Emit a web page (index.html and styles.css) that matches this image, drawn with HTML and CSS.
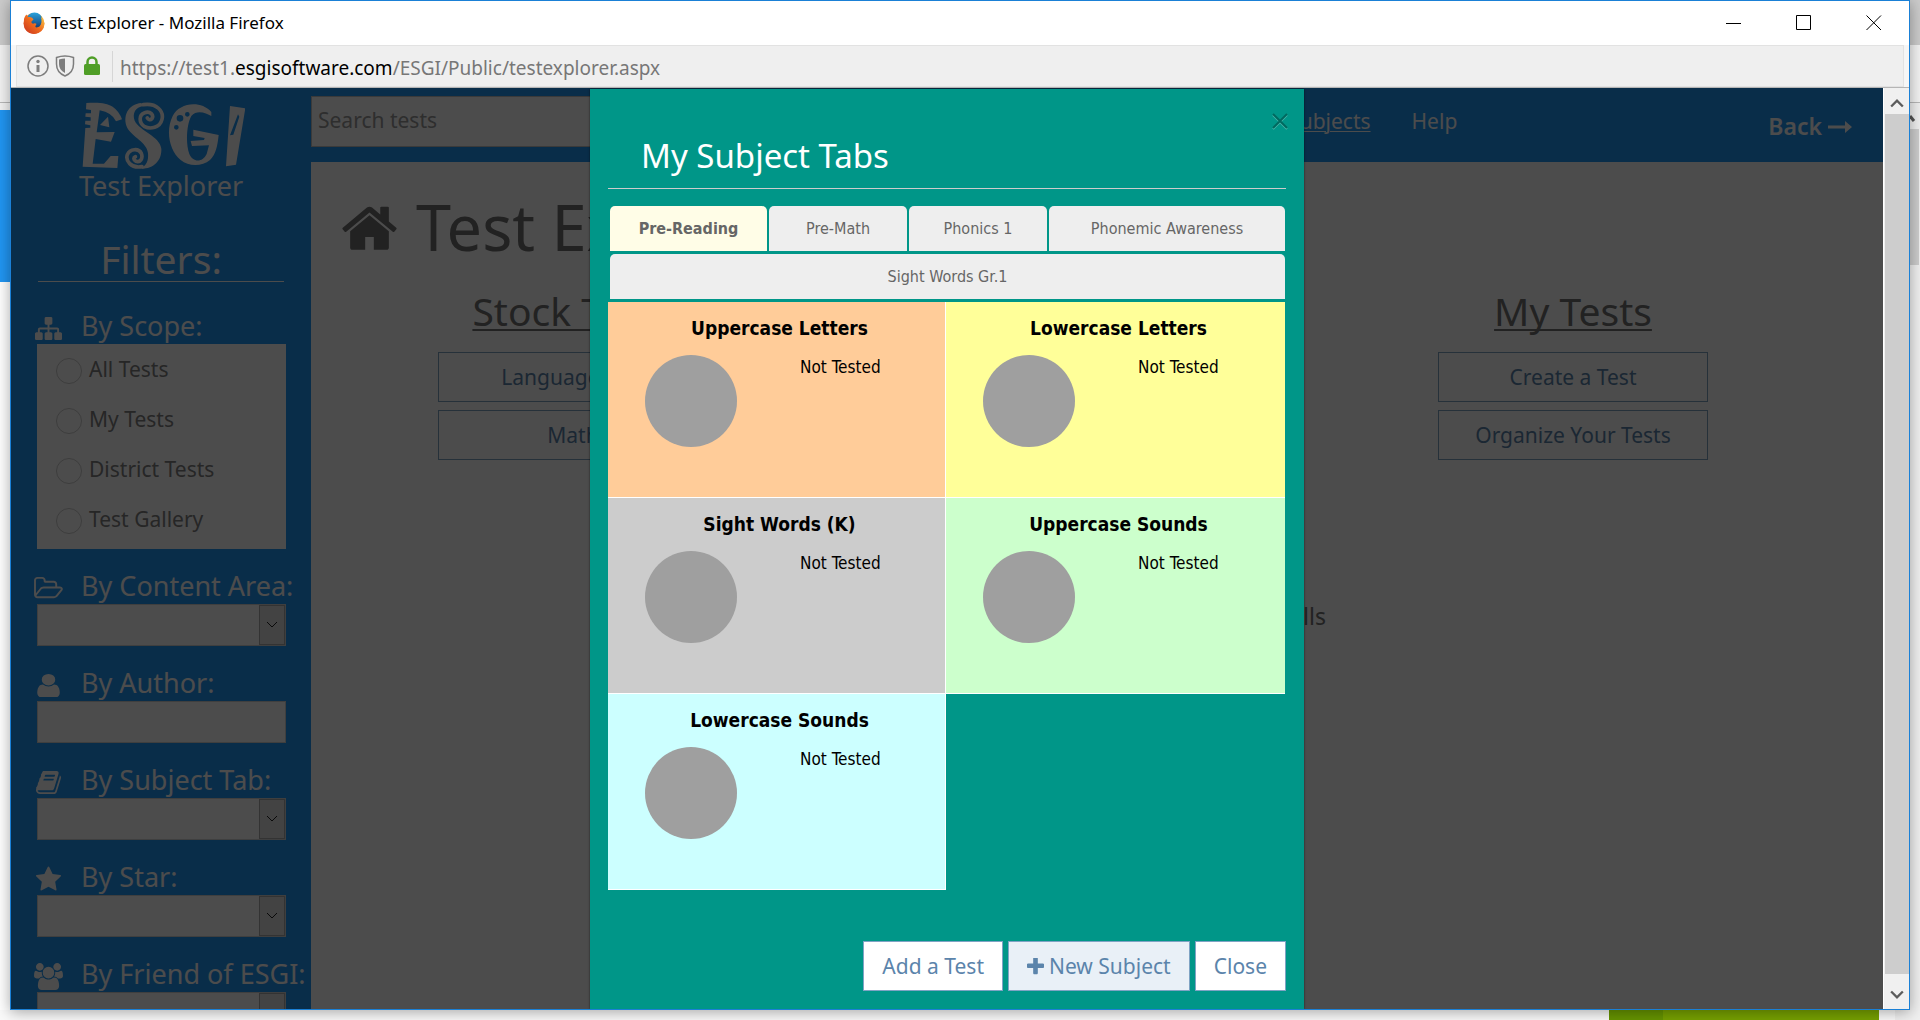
FILE: index.html
```html
<!DOCTYPE html>
<html lang="en">
<head>
<meta charset="utf-8">
<title>Test Explorer</title>
<link rel="stylesheet" href="styles.css">
</head>
<body>
<div class="desk-left" aria-hidden="true">
  <div class="desk-title"></div>
  <div class="desk-toolbar"></div>
  <div class="desk-gap"></div>
  <div class="desk-blue"></div>
</div>

<div class="window">
  <header class="titlebar">
    <svg class="firefox" viewBox="0 0 22 22" aria-hidden="true">
      <defs>
        <linearGradient id="fox" x1="0" y1="1" x2="1" y2="0"><stop offset="0" stop-color="#c8311f"/><stop offset=".5" stop-color="#ee6a1e"/><stop offset="1" stop-color="#fbd84b"/></linearGradient>
        <linearGradient id="globe" x1="0" y1="0" x2="0" y2="1"><stop offset="0" stop-color="#2aa3dc"/><stop offset="1" stop-color="#123a74"/></linearGradient>
      </defs>
      <circle cx="11" cy="11.5" r="10.5" fill="url(#fox)"/>
      <circle cx="11.5" cy="8.5" r="8" fill="url(#globe)"/>
      <path d="M1 7C2 4 3 3 3.500 2.500L5 5C8 4.500 10 6 10.500 7.500L8.500 9.500C8 11 9.500 12 11 11.500C13 11 14 12 13 13C11 15.500 14 16.500 17 14C18.500 12 19 9 18 5C20.500 7 22 11 21 14C19 20 14 22 10 21.800C4 21 0 16 1 7Z" fill="url(#fox)"/>
    </svg>
    <span class="window-title">Test Explorer - Mozilla Firefox</span>
    <button class="win-btn" type="button" aria-label="Minimize"><svg viewBox="0 0 16 16"><path d="M0 8.500H15"/></svg></button>
    <button class="win-btn" type="button" aria-label="Maximize"><svg viewBox="0 0 16 16"><path d="M.500 .500H14.500V14.500H.500Z"/></svg></button>
    <button class="win-btn" type="button" aria-label="Close window"><svg viewBox="0 0 16 16"><path d="M.500 .500L15 15M15 .500L.500 15"/></svg></button>
  </header>

  <div class="urlbar">
    <div class="urlbox">
      <svg class="url-icon" viewBox="0 0 22 22" aria-hidden="true"><circle cx="11" cy="11" r="10" fill="none" stroke="#7d7d7d" stroke-width="1.500"/><circle cx="11" cy="6.500" r="1.700" fill="#7d7d7d"/><path d="M11 10V17" stroke="#7d7d7d" stroke-width="3"/></svg>
      <svg class="url-icon" viewBox="0 0 22 22" aria-hidden="true"><path d="M2.500 2.500Q11 -.500 19.500 2.500V9C19.500 15 16 19 11 21C6 19 2.500 15 2.500 9Z" fill="none" stroke="#7d7d7d" stroke-width="1.500"/><path d="M5 4.500Q8 3.500 11 3.500V18C7 16 5 13 5 9Z" fill="#7d7d7d"/></svg>
      <svg class="url-icon" viewBox="0 0 22 22" aria-hidden="true"><rect x="3" y="9" width="16" height="11" rx="1.500" fill="#4f9e27"/><path d="M6.500 10V7A4.500 4.500 0 0 1 15.500 7V10" fill="none" stroke="#4f9e27" stroke-width="2.500"/></svg>
      <span class="url">https://test1.<span class="host">esgisoftware.com</span>/ESGI/Public/testexplorer.aspx</span>
    </div>
  </div>

  <div class="viewport">
    <div class="page">
      <aside class="sidebar">
        <svg class="logo" viewBox="231 300 504 207" role="img" aria-label="ESGI">
          <path fill="#fff" fill-rule="evenodd" d="M259 309C300 306 320 310 338 320Q358 334 366 358L348 364Q336 338 299 331L290 397L344 396L333 425L287 417L278 491L312 491L332 468L355 468L352 504L248 500L256 384L271 383L271 376L255 373L256 362L272 362V352L256 350L257 340L273 340V330L258 328ZM324 350L328 382L300 375Z"/>
          <path fill="#fff" d="M424 309C384 312 366 350 382 384C398 412 440 426 444 460C446 482 440 494 424 506C462 506 486 480 484 446C480 408 420 394 404 362C396 340 406 322 430 318Z"/>
          <path fill="none" stroke="#fff" stroke-width="11" stroke-linecap="round" d="M430 314C470 308 492 334 486 358C480 384 450 388 434 380C416 368 416 344 434 338C452 332 462 346 456 356C450 362 444 358 442 354M426 500C392 506 376 482 382 464C390 446 416 444 424 460C430 476 420 488 408 484C400 480 400 472 406 470"/>
          <path fill="#fff" fill-rule="evenodd" d="M634 348C618 338 590 328 574 348C560 372 556 430 568 462C578 486 606 490 620 462L627 436L576 438L572 423L612 420L614 414L580 408L580 389L656 405C652 440 648 462 630 480C606 500 566 500 542 480C508 452 496 392 518 348C536 310 600 298 634 336ZM540 345A10 10 0 1 0 540 365A10 10 0 1 0 540 345ZM562 336A7 7 0 1 0 562 350A7 7 0 1 0 562 336ZM529 375A7 7 0 1 0 529 389A7 7 0 1 0 529 375Z"/>
          <path fill="#fff" fill-rule="evenodd" d="M690 318L736 325L708 494L678 499ZM714 343L690 406L700 404L718 350Z"/>
        </svg>
        <p class="app-name">Test Explorer</p>
        <h2 class="filters-title">Filters:</h2>

        <fieldset class="field" aria-labelledby="scope-label">
          <div class="field-label" id="scope-label"><svg class="ico" viewBox="0 0 1792 1792" aria-hidden="true"><path d="M1792 1248v320q0 40-28 68t-68 28h-320q-40 0-68-28t-28-68v-320q0-40 28-68t68-28h96v-192h-512v192h96q40 0 68 28t28 68v320q0 40-28 68t-68 28h-320q-40 0-68-28t-28-68v-320q0-40 28-68t68-28h96v-192h-512v192h96q40 0 68 28t28 68v320q0 40-28 68t-68 28h-320q-40 0-68-28t-28-68v-320q0-40 28-68t68-28h96v-192q0-52 38-90t90-38h512v-192h-96q-40 0-68-28t-28-68v-320q0-40 28-68t68-28h320q40 0 68 28t28 68v320q0 40-28 68t-68 28h-96v192h512q52 0 90 38t38 90v192h96q40 0 68 28t28 68z"/></svg>By Scope:</div>
          <div class="scope">
            <label class="radio"><input type="radio" name="scope"><span>All Tests</span></label>
            <label class="radio"><input type="radio" name="scope"><span>My Tests</span></label>
            <label class="radio"><input type="radio" name="scope"><span>District Tests</span></label>
            <label class="radio"><input type="radio" name="scope"><span>Test Gallery</span></label>
          </div>
        </fieldset>

        <div class="field">
          <label class="field-label" for="area"><svg class="ico ico-wide" viewBox="64 0 1920 1792" aria-hidden="true"><path d="M1845 931q0-35-53-35h-1088q-40 0-85.500 21.500t-71.500 52.500l-294 363q-18 24-18 40 0 35 53 35h1088q40 0 86-22t71-53l294-363q18-22 18-39zm-1141-163h768v-160q0-40-28-68t-68-28h-576q-40 0-68-28t-28-68v-64q0-40-28-68t-68-28h-320q-40 0-68 28t-28 68v853l256-315q44-53 116-87.500t140-34.500zm1269 163q0 62-46 120l-295 363q-43 53-116 87.500t-140 34.500h-1088q-92 0-158-66t-66-158v-960q0-92 66-158t158-66h320q92 0 158 66t66 158v32h544q92 0 158 66t66 158v160h192q54 0 99 24.500t67 70.500q15 32 15 68z"/></svg>By Content Area:</label>
          <div class="select"><select id="area"><option></option></select><span class="drop"><svg viewBox="0 0 12 8"><path d="M1 1L6 6L11 1"/></svg></span></div>
        </div>

        <div class="field">
          <label class="field-label" for="author"><svg class="ico" viewBox="128 0 1536 1792" preserveAspectRatio="none" aria-hidden="true"><path d="M1536 1399q0 109-62.500 187t-150.500 78h-854q-88 0-150.500-78t-62.500-187q0-85 8.500-160.500t31.500-152 58.500-131 94-89 134.500-34.500q131 128 313 128t313-128q76 0 134.500 34.500t94 89 58.500 131 31.500 152 8.500 160.500zm-256-887q0 159-112.500 271.500t-271.500 112.500-271.500-112.500-112.500-271.500 112.500-271.500 271.500-112.500 271.500 112.500 112.500 271.500z"/></svg>By Author:</label>
          <input class="text" id="author" type="text">
        </div>

        <div class="field">
          <label class="field-label" for="tab"><svg class="ico" viewBox="0 0 1792 1792" aria-hidden="true"><path d="M1703 478q40 57 18 129l-275 906q-19 64-76.500 107.500t-122.500 43.500h-923q-77 0-148.500-53.500t-99.500-131.500q-24-67-2-127 0-4 3-27t4-37q1-8-3-21.500t-3-19.500q2-11 8-21t16.500-23.500 16.500-23.500q23-38 45-91.500t30-91.500q3-10 .5-30t-.5-28q3-11 17-28t17-23q21-36 42-92t25-90q1-9-2.500-32t.5-28q4-13 22-30.500t22-22.500q19-26 42.500-84.500t27.500-96.500q1-8-3-25.500t-2-26.500q2-8 9-18t18-23 17-21q8-12 16.500-30.500t15-35 16-36 19.500-32 26.500-23.500 36-11.500 47.500 5.500l-1 3q38-9 51-9h761q74 0 114 56t18 130l-274 906q-36 119-71.500 153.500t-128.500 34.500h-869q-27 0-38 15-11 16-1 43 24 70 144 70h923q29 0 56-15.500t35-41.500l300-987q7-22 5-57 38 15 59 43zm-1064 2q-4 13 2 22.500t20 9.500h608q13 0 25.500-9.500t16.500-22.500l21-64q4-13-2-22.500t-20-9.500h-608q-13 0-25.500 9.500t-16.500 22.500zm-83 256q-4 13 2 22.500t20 9.500h608q13 0 25.500-9.500t16.500-22.500l21-64q4-13-2-22.500t-20-9.500h-608q-13 0-25.500 9.500t-16.500 22.500z"/></svg>By Subject Tab:</label>
          <div class="select"><select id="tab"><option></option></select><span class="drop"><svg viewBox="0 0 12 8"><path d="M1 1L6 6L11 1"/></svg></span></div>
        </div>

        <div class="field">
          <label class="field-label" for="star"><svg class="ico" viewBox="0 0 1792 1792" aria-hidden="true"><path d="M1728 647q0 22-26 48l-363 354 86 500q1 7 1 20 0 21-10.500 35.500t-30.500 14.500q-19 0-40-12l-449-236-449 236q-22 12-40 12-21 0-31.500-14.500t-10.500-35.500q0-6 2-20l86-500-364-354q-25-27-25-48 0-37 56-46l502-73 225-455q19-41 49-41t49 41l225 455 502 73q56 9 56 46z"/></svg>By Star:</label>
          <div class="select"><select id="star"><option></option></select><span class="drop"><svg viewBox="0 0 12 8"><path d="M1 1L6 6L11 1"/></svg></span></div>
        </div>

        <div class="field">
          <label class="field-label" for="friend"><svg class="ico ico-wide" viewBox="0 0 1920 1792" aria-hidden="true"><path d="M593 896q-162 5-265 128h-134q-82 0-138-40.500t-56-118.500q0-353 124-353 6 0 43.500 21t97.500 42.500 119 21.500q67 0 133-23-5 37-5 66 0 143 81 256zm1071 637q0 120-73 189.500t-194 69.500h-874q-121 0-194-69.500t-73-189.500q0-53 3.500-103.500t14-109 26.500-108.500 43-97.500 62-81 85.500-53.500 111.500-20q10 0 43 21.500t73 48 107 48 135 21.500 135-21.500 107-48 73-48 43-21.500q61 0 111.500 20t85.500 53.500 62 81 43 97.500 26.500 108.500 14 109 3.500 103.500zm-1024-1277q0 106-75 181t-181 75-181-75-75-181 75-181 181-75 181 75 75 181zm704 384q0 159-112.500 271.500t-271.500 112.500-271.500-112.500-112.500-271.500 112.500-271.500 271.500-112.500 271.500 112.500 112.500 271.500zm576 225q0 78-56 118.500t-138 40.500h-134q-103-123-265-128 81-113 81-256 0-29-5-66 66 23 133 23 59 0 119-21.500t97.500-42.500 43.500-21q124 0 124 353zm-128-609q0 106-75 181t-181 75-181-75-75-181 75-181 181-75 181 75 75 181z"/></svg>By Friend of ESGI:</label>
          <div class="select"><select id="friend"><option></option></select><span class="drop"><svg viewBox="0 0 12 8"><path d="M1 1L6 6L11 1"/></svg></span></div>
        </div>
      </aside>

      <main class="main">
        <div class="topbar">
          <input class="search" type="text" placeholder="Search tests" aria-label="Search tests">
          <nav class="nav">
            <a class="current" href="#subjects">My Subjects</a>
            <a href="#help">Help</a>
          </nav>
          <a class="back" href="#back">Back<svg viewBox="0 0 24 12" aria-hidden="true"><path d="M0 4.500H17V0L24 6L17 12V7.500H0Z"/></svg></a>
        </div>
        <h1 class="title"><svg viewBox="48 180 1696 1356" aria-hidden="true"><path d="M1472 992v480q0 26-19 45t-45 19h-384v-384h-256v384h-384q-26 0-45-19t-19-45v-480q0-1 .5-3t.5-3l575-474 575 474q1 2 1 6zm223-69l-62 74q-8 9-21 11h-3q-13 0-21-7l-692-577-692 577q-12 8-24 7-13-2-21-11l-62-74q-8-10-7-23.500t11-21.500l719-599q32-26 76-26t76 26l244 204v-195q0-14 9-23t23-9h192q14 0 23 9t9 23v408l219 182q10 8 11 21.500t-7 23.500z"/></svg>Test Explorer</h1>
        <div class="columns">
          <section class="column">
            <h2>Stock Tests</h2>
            <button class="btn wide" type="button">Language Arts</button>
            <button class="btn wide" type="button">Math</button>
          </section>
          <section class="column"><p class="skills">Skills</p></section>
          <section class="column">
            <h2>My Tests</h2>
            <button class="btn wide" type="button">Create a Test</button>
            <button class="btn wide" type="button">Organize Your Tests</button>
          </section>
        </div>
      </main>

      <div class="backdrop">
        <div class="modal" role="dialog" aria-labelledby="modal-title">
          <button class="modal-x" type="button" aria-label="Close dialog"><svg viewBox="0 0 16 16"><path class="glow" d="M1 2L15 16M15 2L1 16"/><path d="M1 1L15 15M15 1L1 15"/></svg></button>
          <h2 class="modal-title" id="modal-title">My Subject Tabs</h2>
          <div class="tabs" role="tablist">
            <button class="tab active" type="button" role="tab" aria-selected="true">Pre-Reading</button>
            <button class="tab" type="button" role="tab">Pre-Math</button>
            <button class="tab" type="button" role="tab">Phonics 1</button>
            <button class="tab" type="button" role="tab">Phonemic Awareness</button>
            <button class="tab full" type="button" role="tab">Sight Words Gr.1</button>
          </div>
          <div class="cards">
            <article class="card orange"><h3>Uppercase Letters</h3><div class="result"><span class="pie"></span><span class="status">Not Tested</span></div></article>
            <article class="card yellow"><h3>Lowercase Letters</h3><div class="result"><span class="pie"></span><span class="status">Not Tested</span></div></article>
            <article class="card gray"><h3>Sight Words (K)</h3><div class="result"><span class="pie"></span><span class="status">Not Tested</span></div></article>
            <article class="card green"><h3>Uppercase Sounds</h3><div class="result"><span class="pie"></span><span class="status">Not Tested</span></div></article>
            <article class="card cyan"><h3>Lowercase Sounds</h3><div class="result"><span class="pie"></span><span class="status">Not Tested</span></div></article>
          </div>
          <div class="actions">
            <button class="btn solid" type="button">Add a Test</button>
            <button class="btn solid tinted" type="button"><svg viewBox="192 192 1408 1408" aria-hidden="true"><path d="M1600 736v192q0 40-28 68t-68 28h-416v416q0 40-28 68t-68 28h-192q-40 0-68-28t-28-68v-416h-416q-40 0-68-28t-28-68v-192q0-40 28-68t68-28h416v-416q0-40 28-68t68-28h192q40 0 68 28t28 68v416h416q40 0 68 28t28 68z"/></svg>New Subject</button>
            <button class="btn solid" type="button">Close</button>
          </div>
        </div>
      </div>
    </div>

    <div class="scrollbar" aria-hidden="true">
      <svg viewBox="0 0 12 10"><path d="M1 8L6 3L11 8"/></svg>
      <div class="thumb"></div>
      <svg class="down" viewBox="0 0 12 10"><path d="M1 2L6 7L11 2"/></svg>
    </div>
  </div>
</div>

<div class="desk-right" aria-hidden="true">
  <div class="desk-title"></div>
  <div class="desk-toolbar"></div>
  <svg class="desk-arrow" viewBox="0 0 10 26"><path d="M0 13L4 18"/></svg>
  <div class="desk-thumb"></div>
</div>
<div class="desk-bottom" aria-hidden="true">
  <div class="leaf dark"></div>
  <div class="leaf"></div>
  <div class="desk-corner"></div>
</div>
</body>
</html>
```
FILE: styles.css
```css
* { box-sizing: border-box; }

body {
  margin: 0;
  height: 100vh;
  display: grid;
  grid-template: minmax(0, 1fr) 10px / 10px minmax(0, 1fr) 10px;
  overflow: hidden;
  background: #fff;
  color: #727272;
  font: 21px/28px "Noto Sans", "Open Sans", sans-serif;
}

h1, h2, h3, p, fieldset { margin: 0; padding: 0; border: 0; font-weight: 400; }
button, input, select { margin: 0; font: inherit; color: inherit; border-radius: 0; }
a { color: inherit; text-decoration: none; }
svg { display: block; flex: none; }

/* Windows behind the browser window */
.desk-left, .desk-right { display: flex; flex-direction: column; }
.desk-right { background: #f0f0f0; }
.desk-title { height: 45px; background: #cbcbcb; }
.desk-toolbar { height: 58px; background: #f3f3f3; border-bottom: 1px solid #b8b8b8; }
.desk-gap { height: 7px; background: #f3f3f3; }
.desk-blue { height: 172px; background: #2196f3; }
.desk-arrow { width: 10px; height: 26px; fill: none; stroke: #555; stroke-width: 3; }
.desk-thumb { width: 9px; height: 136px; background: #cdcdcd; }
.desk-bottom { grid-column: 1 / -1; display: flex; justify-content: flex-end; background: #fafafa; }
.leaf { width: 216px; background: #77a100; }
.leaf.dark { width: 54px; background: #669400; }
.desk-corner { width: 25px; margin-left: 16px; background: #f0f0f0; }

/* Browser window */
.window {
  position: relative;
  z-index: 1;
  display: flex;
  flex-direction: column;
  min-height: 0;
  border: 1px solid #1a80d6;
  background: #fff;
  box-shadow: 0 2px 14px rgba(0, 0, 0, .35);
}
.titlebar { display: flex; align-items: center; height: 44px; padding-left: 12px; color: #000; }
.firefox { width: 22px; height: 22px; }
.window-title { flex: 1; padding-left: 6px; font-size: 17px; line-height: 24px; }
.win-btn { display: grid; place-items: center; width: 70px; height: 44px; padding: 0; border: 0; background: none; }
.win-btn svg { width: 16px; height: 16px; fill: none; stroke: #000; }
.urlbar { height: 43px; padding: 0 5px; background: #f6f6f6; border-bottom: 1px solid #b5b5b5; }
.urlbox { display: flex; align-items: center; gap: 5px; height: 42px; padding-left: 10px; border: 1px solid #e2e2e2; background: #efefef; }
.url-icon { width: 22px; height: 22px; }
.url { margin-left: 4px; padding: 3px 0 0 7px; border-left: 1px solid #d6d6d6; font-size: 19px; line-height: 28px; color: #777; }
.host { color: #000; }

.viewport { flex: 1; display: flex; min-height: 0; }
.page { position: relative; flex: 1; display: grid; grid-template-columns: 300px minmax(0, 1fr); overflow: hidden; }
.scrollbar { width: 26px; display: flex; flex-direction: column; align-items: center; padding: 9px 0 8px; border-left: 1px solid #fff; background: #f0f0f0; }
.scrollbar svg { width: 14px; height: 12px; fill: none; stroke: #5c5c5c; stroke-width: 2; }
.thumb { flex: 1; width: 24px; margin: 5px 0 15px; background: #cdcdcd; }

/* Filters */
.sidebar { display: flex; flex-direction: column; padding-top: 12px; background: #2196f3; color: #fff; font-size: 27px; }
.logo { width: 168px; height: 69px; align-self: center; }
.app-name { padding-top: 1px; line-height: 32px; text-align: center; }
.filters-title { margin: 34px 27px 7px; border-bottom: 1px solid #fff; font-size: 39px; line-height: 45px; text-align: center; }
.field { min-width: 0; margin-top: 18px; padding-left: 20px; }
.field-label { display: flex; align-items: center; height: 37px; line-height: 36px; white-space: nowrap; }
.ico { width: 27px; height: 27px; margin: 5px 19px 0 4px; fill: currentColor; }
.ico-wide { width: 29px; margin: 5px 18px 0 3px; }
.scope { width: 249px; margin-left: 6px; padding: 2px 0 3px; background: #fff; color: #808080; font-size: 21px; line-height: 28px; }
.radio { display: flex; align-items: center; gap: 7px; height: 50px; padding-left: 19px; }
.radio input { appearance: none; width: 26px; height: 26px; border: 1px solid #ccc; border-radius: 50%; background: #fff; }
.radio span { padding-bottom: 5px; }
.select { position: relative; width: 249px; margin-left: 6px; }
.select select, .text { display: block; width: 100%; height: 42px; appearance: none; border: 1px solid #d4d4d4; background: #fff; padding: 0 6px; }
.text { width: 249px; margin-left: 6px; }
.drop { position: absolute; top: 1px; right: 1px; bottom: 1px; width: 26px; display: grid; place-items: center; border: 1px solid #aaa; background: #e1e1e1; pointer-events: none; }
.drop svg { width: 12px; height: 8px; fill: none; stroke: #222; stroke-width: 1; }

/* Main column */
.main { background: #fff; }
.topbar { display: flex; align-items: center; height: 74px; padding-right: 31px; background: #2196f3; color: #fff; }
.search { width: 600px; height: 51px; margin-bottom: 7px; padding: 0 6px 3px; border: 1px solid #c4c4c4; background: #fff; }
.search::placeholder { color: #999; opacity: 1; }
.nav { display: flex; gap: 41px; margin-left: auto; padding-bottom: 8px; }
.current { text-decoration: underline; text-underline-offset: 2px; text-decoration-thickness: 1px; }
.back { display: flex; align-items: center; gap: 6px; margin-left: 311px; padding-top: 1px; font-size: 23px; font-weight: 600; }
.back svg { width: 24px; height: 12px; margin-top: 2px; fill: currentColor; }
.title { display: flex; align-items: center; gap: 18px; padding: 21px 0 0 30px; font-size: 63px; line-height: 88px; }
.title svg { width: 57px; height: 46px; fill: currentColor; }
.columns { display: grid; grid-template-columns: repeat(3, minmax(0, 1fr)); padding: 14px 60px 0 12px; }
.column { display: flex; flex-direction: column; align-items: center; gap: 8px; }
.column h2 { margin-bottom: 7px; font-size: 39px; line-height: 52px; text-decoration: underline; text-underline-offset: 3px; text-decoration-thickness: 2px; text-decoration-skip-ink: none; }
.skills { align-self: flex-end; margin: 315px -3px 0 0; font-size: 23px; line-height: 32px; }

.btn { height: 50px; padding: 0 18px; border: 1px solid #7fa3c4; background: none; color: #5b84ab; line-height: 28px; white-space: nowrap; }
.btn.wide { width: 270px; }

/* Dialog */
.backdrop { position: absolute; inset: 0; display: flex; justify-content: center; align-items: stretch; padding-top: 1px; background: rgba(0, 0, 0, .7); }
.modal { position: relative; width: 714px; padding: 45px 18px 18px; background: #009688; color: #fff; box-shadow: 0 0 2px rgba(0, 0, 0, .6); }
.modal-x { position: absolute; top: 24px; right: 16px; padding: 0; border: 0; background: none; }
.modal-x svg { width: 16px; height: 16px; overflow: visible; fill: none; stroke: #00695f; stroke-width: 2; }
.modal-x .glow { stroke: #4db6ac; }
.modal-title { padding: 0 33px 10px; border-bottom: 1px solid #ccc; font-size: 33px; line-height: 44px; }
.tabs { display: grid; grid-template-columns: 157px 138px 138px minmax(0, 1fr); gap: 3px 2px; padding: 17px 1px 0 2px; }
.tab { height: 45px; padding: 0; border: 0; border-radius: 5px 5px 0 0; background: #eee; color: #666; font: 16px/20px "DejaVu Sans Condensed", "DejaVu Sans", sans-serif; }
.tab.active { background: #fffde7; font-weight: 700; }
.tab.full { grid-column: 1 / -1; }
.cards { display: grid; grid-template-columns: 338px minmax(0, 1fr); grid-auto-rows: 196px; margin: 3px 1px 0 0; }
.card { padding-top: 14px; border-bottom: 1px solid #fff; color: #000; font: 17px/20px "DejaVu Sans Condensed", "DejaVu Sans", sans-serif; }
.card:nth-child(odd) { border-right: 1px solid #fff; }
.card h3 { padding-left: 6px; font-size: 19px; font-weight: 700; line-height: 24px; text-align: center; }
.result { display: flex; align-items: flex-start; gap: 63px; padding: 15px 0 0 37px; }
.pie { width: 92px; height: 92px; border-radius: 50%; background: #9f9f9f; }
.status { padding-top: 2px; }
.orange { background: #fc9; }
.yellow { background: #ff9; }
.gray { background: #ccc; }
.green { background: #cfc; }
.cyan { background: #cff; }
.actions { display: flex; justify-content: flex-end; gap: 5px; margin-top: 51px; }
.btn.solid { display: flex; align-items: center; gap: 5px; background: #fff; }
.btn.tinted { background: #e9f0f7; }
.btn svg { width: 17px; height: 17px; fill: currentColor; }
```
